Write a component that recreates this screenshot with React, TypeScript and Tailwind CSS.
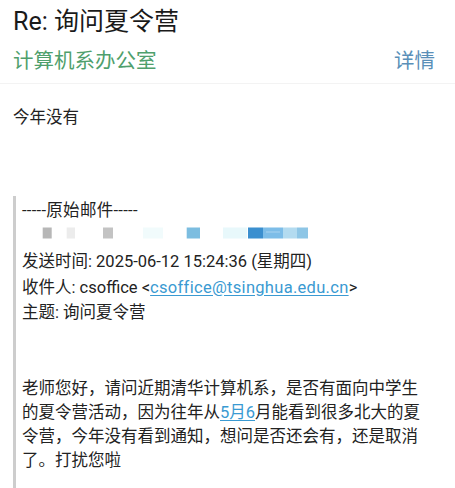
import React from "react";

const font = { fontFamily: 'Roboto, "Noto Sans CJK SC", sans-serif' };

function Blurred() {
  return (
    <svg width="300" height="25.5" viewBox="0 0 300 25.5" className="block">
      <defs>
        <filter id="b" x="-10%" y="-50%" width="120%" height="200%">
          <feGaussianBlur stdDeviation="0.6" />
        </filter>
      </defs>
      <g filter="url(#b)">
        <rect x="20.7" y="3.5" width="9" height="11" fill="#b7b7b7" />
        <rect x="44.7" y="3.5" width="8.3" height="11" fill="#ececec" />
        <rect x="81" y="3.5" width="10" height="11" fill="#c3c3c3" />
        <rect x="121" y="3.5" width="20" height="11" fill="#f1fbfc" />
        <rect x="164.7" y="3.5" width="13.3" height="11" fill="#7cbde0" />
        <rect x="201" y="3.5" width="24" height="11" fill="#e8f8fb" />
        <rect x="226" y="3.5" width="15" height="11" fill="#3b8fcf" />
        <rect x="241" y="3.5" width="20" height="11" fill="#7dbde8" />
        <rect x="244" y="7.5" width="14" height="1" fill="#a9d4f0" />
        <rect x="261" y="3.5" width="14" height="11" fill="#b3dbf0" />
        <rect x="275" y="3.5" width="11" height="11" fill="#8ec6e6" />
      </g>
    </svg>
  );
}

export default function App() {
  return (
    <div className="w-[455px] h-[488px] overflow-hidden bg-white text-[#222]" style={font}>
      <div className="pl-[13px] pr-[20px] pt-[7px] pb-[8px] border-b border-[#f3f3f3]">
        <div className="text-[25px] leading-[30px] text-[#1a1a1a]">Re: 询问夏令营</div>
        <div className="mt-[10px] flex items-center justify-between h-[28px]">
          <span className="text-[20.5px] leading-[28px] text-[#4f9f6c]">计算机系办公室</span>
          <span className="text-[20.5px] leading-[28px] text-[#5a8fb8]">详情</span>
        </div>
      </div>
      <div className="pl-[13px] pt-[22px] text-[16.5px] leading-[24px]">今年没有</div>
      <div className="mt-[66px] ml-[13px] border-l-[3px] border-[#cdcdcd] pl-[6px] pr-[27px] pt-[2px] pb-[20px] text-[16.5px]">
        <div className="leading-[25.5px]">
          <div className="tracking-[0.3px]">-----原始邮件-----</div>
          <Blurred />
          <div>发送时间: 2025-06-12 15:24:36 (星期四)</div>
          <div>
            收件人: csoffice &lt;
            <span className="text-[#3a9ad2] underline underline-offset-2 tracking-[0.3px]">csoffice@tsinghua.edu.cn</span>
            &gt;
          </div>
          <div>主题: 询问夏令营</div>
        </div>
        <p className="mt-[51px] leading-[24px]">
          老师您好，请问近期清华计算机系，是否有面向中学生的夏令营活动，因为往年从
          <span className="text-[#3a9ad2] underline underline-offset-2">5月6</span>
          月能看到很多北大的夏令营，今年没有看到通知，想问是否还会有，还是取消了。打扰您啦
        </p>
      </div>
    </div>
  );
}
